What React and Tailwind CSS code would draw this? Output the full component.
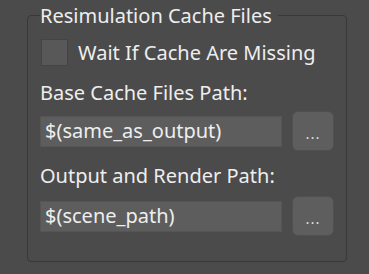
import React from "react";

function PathRow({ value }) {
  return (
    <div className="flex items-center gap-[10px]">
      <div className="w-[242px] h-[31px] bg-[#5d5d5d] border border-[#555555] flex items-center px-[4px] text-[20px] text-[#eeeeee]">
        {value}
      </div>
      <button className="w-[42px] h-[40px] bg-[#5e5e5e] border border-[#505050] rounded-[6px] text-[#dddddd] text-[15px] leading-none pt-[4px] tracking-[1px]">
        ...
      </button>
    </div>
  );
}

export default function App() {
  return (
    <div
      className="w-[369px] h-[274px] bg-[#4b4b4b] relative"
      style={{ fontFamily: '"Noto Sans", "Open Sans", sans-serif' }}
    >
      <div className="absolute left-[27px] top-[15px] w-[320px] h-[247px] border border-[#383838] rounded-[4px]" />
      <div className="relative pl-[40px] pt-[1px] text-[#eeeeee] text-[20px]">
        <div className="inline-block bg-[#4b4b4b] pr-[6px] h-[26px] leading-[26px]">
          Resimulation Cache Files
        </div>
        <div className="flex items-center gap-[10px] mt-[8px] ml-[1px]">
          <div className="w-[27px] h-[27px] bg-[#585858] border border-[#444444]" />
          <span className="leading-[27px]">Wait If Cache Are Missing</span>
        </div>
        <div className="mt-[15px] leading-[24px]">Base Cache Files Path:</div>
        <div className="mt-[6px]">
          <PathRow value="$(same_as_output)" />
        </div>
        <div className="mt-[13px] leading-[24px]">Output and Render Path:</div>
        <div className="mt-[8px]">
          <PathRow value="$(scene_path)" />
        </div>
      </div>
    </div>
  );
}
